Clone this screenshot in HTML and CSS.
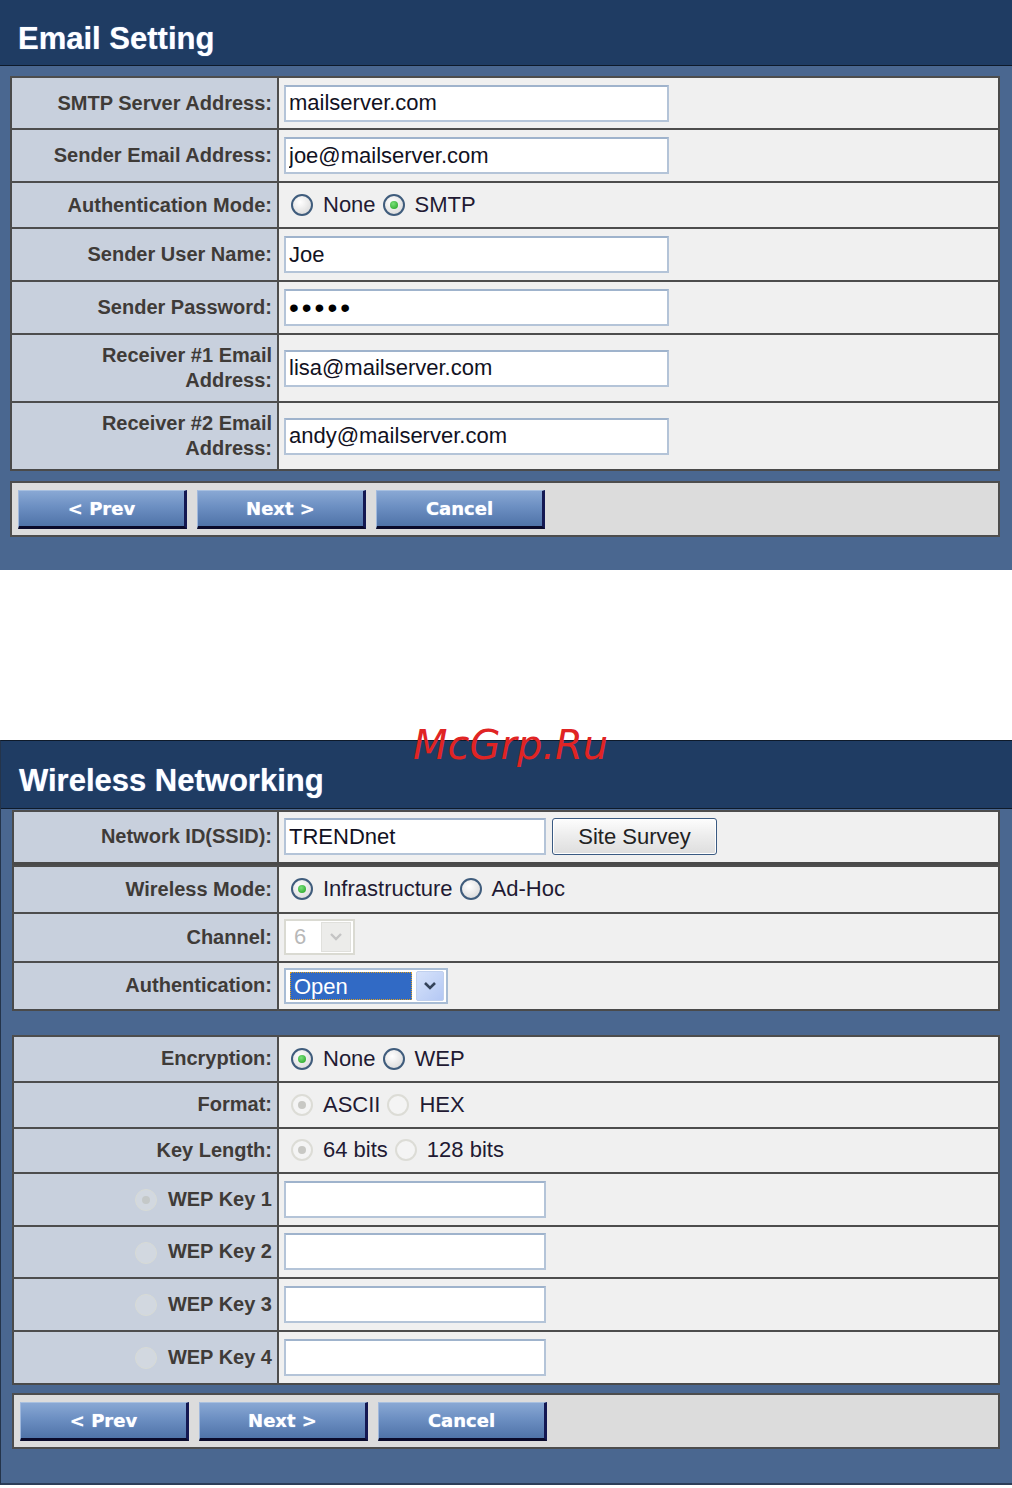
FILE: index.html
```html
<html>
<head>
<meta charset="utf-8">
<link rel="stylesheet" href="styles.css">
</head>
<body>

<div class="panel email">
   <div class="head">Email Setting</div>
   <div class="body">
      <table class="form">
         <tr class="r52">
            <td class="lbl">SMTP Server Address:</td>
            <td class="val"><input class="txt wide" type="text" value="mailserver.com"></td>
         </tr>
         <tr class="r53">
            <td class="lbl">Sender Email Address:</td>
            <td class="val"><input class="txt wide" type="text" value="joe@mailserver.com"></td>
         </tr>
         <tr class="r46">
            <td class="lbl">Authentication Mode:</td>
            <td class="val"><span class="opt"><span class="radio"></span>None</span><span class="opt"><span class="radio on"></span>SMTP</span></td>
         </tr>
         <tr class="r53">
            <td class="lbl">Sender User Name:</td>
            <td class="val"><input class="txt wide" type="text" value="Joe"></td>
         </tr>
         <tr class="r53">
            <td class="lbl">Sender Password:</td>
            <td class="val"><input class="txt wide pw" type="password" value="abcde"></td>
         </tr>
         <tr class="r68">
            <td class="lbl">Receiver #1 Email<br>Address:</td>
            <td class="val"><input class="txt wide" type="text" value="lisa@mailserver.com"></td>
         </tr>
         <tr class="r68">
            <td class="lbl">Receiver #2 Email<br>Address:</td>
            <td class="val"><input class="txt wide" type="text" value="andy@mailserver.com"></td>
         </tr>
      </table>
      <div class="bar">
         <button class="btn">&lt; Prev</button>
         <button class="btn">Next &gt;</button>
         <button class="btn">Cancel</button>
      </div>
   </div>
</div>

<div class="gap"></div>

<div class="panel wireless">
   <div class="mark">McGrp.Ru</div>
   <div class="head">Wireless Networking</div>
   <div class="body">
      <table class="form first">
         <tr class="r52">
            <td class="lbl">Network ID(SSID):</td>
            <td class="val"><input class="txt short" type="text" value="TRENDnet"><button class="survey">Site Survey</button></td>
         </tr>
      </table>
      <table class="form">
         <tr class="r47">
            <td class="lbl">Wireless Mode:</td>
            <td class="val"><span class="opt"><span class="radio on"></span>Infrastructure</span><span class="opt"><span class="radio"></span>Ad-Hoc</span></td>
         </tr>
         <tr class="r49">
            <td class="lbl">Channel:</td>
            <td class="val">
               <span class="sel off"><span class="face">6</span><span class="arrow"><svg width="14" height="10" viewBox="0 0 14 10"><path d="M2 2 L7 7 L12 2" fill="none" stroke="#c4c4c4" stroke-width="2.4"/></svg></span></span>
            </td>
         </tr>
         <tr class="r48">
            <td class="lbl">Authentication:</td>
            <td class="val">
               <span class="sel auth"><span class="face">Open</span><span class="arrow"><svg width="14" height="10" viewBox="0 0 14 10"><path d="M2 2 L7 7 L12 2" fill="none" stroke="#34435a" stroke-width="2.6"/></svg></span></span>
            </td>
         </tr>
      </table>

      <table class="form second">
         <tr class="r46">
            <td class="lbl">Encryption:</td>
            <td class="val"><span class="opt"><span class="radio on"></span>None</span><span class="opt"><span class="radio"></span>WEP</span></td>
         </tr>
         <tr class="r46">
            <td class="lbl">Format:</td>
            <td class="val"><span class="opt"><span class="radio dis on"></span>ASCII</span><span class="opt"><span class="radio dis"></span>HEX</span></td>
         </tr>
         <tr class="r45">
            <td class="lbl">Key Length:</td>
            <td class="val"><span class="opt"><span class="radio dis on"></span>64 bits</span><span class="opt"><span class="radio dis"></span>128 bits</span></td>
         </tr>
         <tr class="r53">
            <td class="lbl"><span class="radio faint on"></span>WEP Key 1</td>
            <td class="val"><input class="txt short" type="text" value=""></td>
         </tr>
         <tr class="r52">
            <td class="lbl"><span class="radio faint"></span>WEP Key 2</td>
            <td class="val"><input class="txt short" type="text" value=""></td>
         </tr>
         <tr class="r53">
            <td class="lbl"><span class="radio faint"></span>WEP Key 3</td>
            <td class="val"><input class="txt short" type="text" value=""></td>
         </tr>
         <tr class="r53">
            <td class="lbl"><span class="radio faint"></span>WEP Key 4</td>
            <td class="val"><input class="txt short" type="text" value=""></td>
         </tr>
      </table>
      <div class="bar">
         <button class="btn">&lt; Prev</button>
         <button class="btn">Next &gt;</button>
         <button class="btn">Cancel</button>
      </div>
   </div>
</div>

</body>
</html>
```

FILE: styles.css
```css
body{
   margin: 0;
   background: #ffffff;
   font-family: "Liberation Sans", Arial, sans-serif;
   position: relative;
}

.panel{
   background: #4a6790;
   width: 1012px;
   box-sizing: border-box;
}
.panel .head{
   background: #1f3c63;
   color: #ffffff;
   font-weight: bold;
   font-size: 31px;
   height: 66px;
   box-sizing: border-box;
   padding: 21px 0 0 18px;
   border-bottom: 1px solid #0e1a2a;
   text-shadow: 0 0 1px #8ab4ff;
}
.email .body{
   padding: 10px 12px 33px 10px;
}

.gap{
   height: 170px;
}

.wireless{
   position: relative;
   border-top: 1px solid #0e1a2a;
   border-left: 1px solid #24344a;
   border-bottom: 2px solid #2c3e58;
}
.wireless .head{
   height: 68px;
   padding: 22px 0 0 18px;
}
.wireless .body{
   padding: 1px 12px 34px 11px;
}
.wireless td.lbl{
   width: 258px;
}

.mark{
   position: absolute;
   left: 412px;
   top: -16px;
   font-family: "DejaVu Sans", sans-serif;
   font-style: italic;
   font-size: 40px;
   line-height: 1;
   color: #e02424;
   z-index: 2;
}

table.form{
   width: 100%;
   border-collapse: collapse;
   border: 2px solid #4a4a4a;
}
table.form td{
   border-top: 2px solid #4d4d4d;
   padding: 0;
   vertical-align: middle;
}
table.first{
   border-bottom-width: 3px;
}
table.second{
   margin-top: 24px;
}

td.lbl{
   width: 260px;
   background: #c8d0dd;
   text-align: right;
   padding-right: 5px !important;
   font-weight: bold;
   font-size: 20px;
   line-height: 25px;
   color: #3f3b38;
   border-right: 2px solid #4d4d4d;
}
td.val{
   background: #f0f0f0;
   padding-left: 5px !important;
   font-size: 22px;
   color: #221a33;
}

tr.r45{ height: 45px; }
tr.r46{ height: 46px; }
tr.r47{ height: 47px; }
tr.r48{ height: 48px; }
tr.r49{ height: 49px; }
tr.r52{ height: 52px; }
tr.r53{ height: 53px; }
tr.r68{ height: 68px; }

.txt{
   height: 37px;
   box-sizing: border-box;
   border: 2px solid #b4c4d8;
   border-top-color: #9fb3cc;
   background: #ffffff;
   font-family: "Liberation Sans", Arial, sans-serif;
   font-size: 22px;
   color: #111122;
   padding: 0 3px;
   vertical-align: middle;
   margin: 0;
}
.wide{ width: 385px; }
.short{ width: 262px; }
.pw{
   font-size: 28px;
   letter-spacing: 3px;
   color: #000000;
}

.survey{
   margin-left: 6px;
   width: 165px;
   height: 37px;
   vertical-align: middle;
   font-family: "Liberation Sans", Arial, sans-serif;
   font-size: 22px;
   color: #222222;
   border: 1px solid #3a5a82;
   border-radius: 3px;
   background: linear-gradient(#fdfdfd, #ececec 50%, #dedede);
   box-shadow: inset 0 0 0 1px #ffffff;
}

.opt{
   display: inline-flex;
   align-items: center;
}
.radio{
   display: inline-block;
   width: 18px;
   height: 18px;
   border: 2px solid #3f5c7c;
   border-radius: 50%;
   background: radial-gradient(circle at 40% 35%, #ffffff, #dcdcdc 80%);
   margin: 0 10px 0 7px;
   position: relative;
   vertical-align: middle;
}
.radio.on::after{
   content: "";
   position: absolute;
   left: 5px;
   top: 5px;
   width: 8px;
   height: 8px;
   border-radius: 50%;
   background: radial-gradient(circle at 40% 35%, #7be07b, #1ea01e);
}
.radio.dis{
   border-color: #dcdcd6;
   background: #f4f4f4;
}
.radio.dis.on::after{
   background: #c8c8c4;
}
.radio.faint{
   border: 1px solid #d8dbd6;
   width: 20px;
   height: 20px;
   background: #d2d8e0;
   margin: 0 11px 0 0;
}
.radio.faint.on::after{
   left: 6px;
   top: 6px;
   background: #c4c8c8;
}

.sel{
   display: inline-flex;
   align-items: center;
   height: 36px;
   box-sizing: border-box;
   vertical-align: middle;
   padding: 2px;
}
.sel.off{
   width: 71px;
   border: 2px solid #dadad2;
   background: #ffffff;
}
.sel.off .face{
   flex: 1;
   color: #b8b8b8;
   padding-left: 6px;
}
.sel.off .arrow{
   width: 30px;
   height: 30px;
   background: #ececea;
   border: 1px solid #e0e0dc;
   display: flex;
   align-items: center;
   justify-content: center;
   box-sizing: border-box;
}
.sel.auth{
   width: 164px;
   border: 2px solid #a8bcd4;
   background: #ffffff;
}
.sel.auth .face{
   width: 122px;
   height: 28px;
   line-height: 28px;
   box-sizing: border-box;
   background: #316ac5;
   color: #ffffff;
   border: 1px dotted #e0a020;
   padding-left: 3px;
   margin-left: 2px;
}
.sel.auth .arrow{
   margin-left: 4px;
   width: 28px;
   height: 30px;
   background: linear-gradient(135deg, #d6e2fa, #b4c8f4);
   border: 1px solid #c0d0ee;
   border-radius: 2px;
   display: flex;
   align-items: center;
   justify-content: center;
   box-sizing: border-box;
}

.bar{
   margin-top: 10px;
   height: 56px;
   box-sizing: border-box;
   border: 2px solid #4d4d4d;
   background: #dcdcdc;
   padding: 7px 6px;
   display: flex;
   gap: 10px;
}
.wireless .bar{
   margin-top: 8px;
}
.btn{
   width: 169px;
   height: 39px;
   font-family: "DejaVu Sans", Verdana, sans-serif;
   font-weight: bold;
   font-size: 18px;
   color: #ffffff;
   background: linear-gradient(#89a8d4, #6c8fc2 45%, #4f73a8);
   border-top: 1px solid #a8c0e0;
   border-left: 1px solid #a0b8dc;
   border-right: 3px solid #141852;
   border-bottom: 3px solid #0a0a2a;
   padding: 0;
   text-shadow: 0 0 1px #c8dcff;
}
```
